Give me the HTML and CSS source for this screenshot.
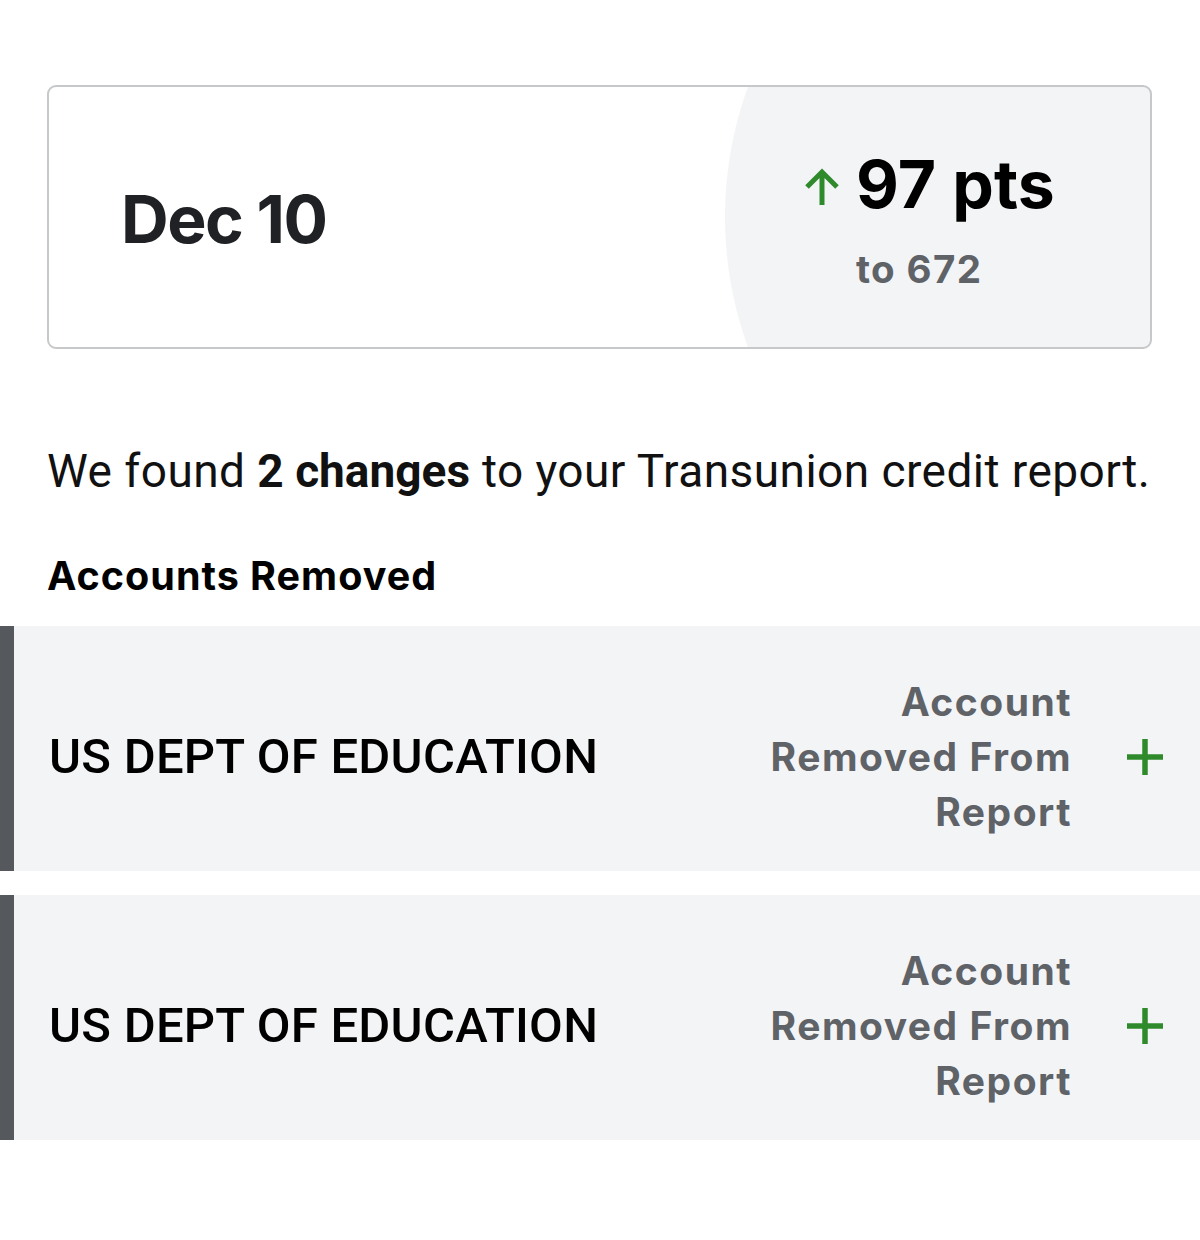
FILE: index.html
```html
<!DOCTYPE html>
<html lang="en">
<head>
<meta charset="utf-8">
<title>Credit report changes</title>
<link rel="stylesheet" href="styles.css">
</head>
<body>
<main class="page">
  <section class="summary">
    <div class="card">
      <div class="card-date">Dec 10</div>
      <div class="score">
        <svg class="score-arrow" viewBox="0 0 34 37" width="34" height="37" aria-hidden="true">
          <path d="M17 37 V4 M2 19 L17 4 L32 19" fill="none" stroke="#2f8a2c" stroke-width="5"/>
        </svg>
        <div class="score-pts">97 pts</div>
        <div class="score-to">to 672</div>
      </div>
    </div>
    <p class="intro">We found <strong>2 changes</strong> to your Transunion credit report.</p>
    <h2 class="section-title">Accounts Removed</h2>
  </section>
  <ul class="changes">
    <li class="change">
      <span class="change-name">US DEPT OF EDUCATION</span>
      <span class="change-status">Account Removed From Report</span>
      <svg class="change-plus" viewBox="0 0 36 36" width="36" height="36" aria-hidden="true">
        <path d="M18 0 V36 M0 18 H36" fill="none" stroke="#2f8a2c" stroke-width="5.5"/>
      </svg>
    </li>
    <li class="change">
      <span class="change-name">US DEPT OF EDUCATION</span>
      <span class="change-status">Account Removed From Report</span>
      <svg class="change-plus" viewBox="0 0 36 36" width="36" height="36" aria-hidden="true">
        <path d="M18 0 V36 M0 18 H36" fill="none" stroke="#2f8a2c" stroke-width="5.5"/>
      </svg>
    </li>
  </ul>
</main>
</body>
</html>
```
FILE: styles.css
```css
* { box-sizing: border-box; }

html, body {
  margin: 0;
  padding: 0;
  background: #ffffff;
}

body {
  font-family: Inter, "Liberation Sans", sans-serif;
  color: #000;
}

.page {
  padding-top: 85px;
}

.summary {
  padding: 0 48px 0 47px;
}

.card {
  height: 264px;
  border: 2px solid #c6c8ca;
  border-radius: 9px;
  display: flex;
  align-items: center;
  justify-content: space-between;
  padding: 0 95px 0 72px;
  background: radial-gradient(circle 380px at calc(100% - 45px) 50%, #f3f4f6 379.5px, #ffffff 380.5px);
}

.card-date {
  font-size: 66px;
  line-height: 66px;
  font-weight: 700;
  color: #202124;
  letter-spacing: -1.5px;
  margin-top: 4px;
}

.score {
  display: grid;
  grid-template-columns: auto auto;
  column-gap: 17px;
  align-items: center;
  margin-top: 4px;
}

.score-arrow {
  display: block;
  margin-top: 6px;
}

.score-pts {
  font-size: 66px;
  line-height: 66px;
  font-weight: 700;
  letter-spacing: 0.2px;
  color: #000;
}

.score-to {
  grid-column: 2;
  font-size: 38.5px;
  line-height: 38px;
  font-weight: 700;
  letter-spacing: 1.4px;
  color: #5f6368;
  margin-top: 33px;
}

.intro {
  margin: 94px 0 0;
  font-family: Roboto, sans-serif;
  font-size: 46px;
  line-height: 56px;
  font-weight: 400;
  letter-spacing: 0.45px;
  color: #111;
  white-space: nowrap;
}

.intro strong {
  font-weight: 700;
  letter-spacing: 0;
}

.section-title {
  margin: 54px 0 0;
  font-family: Inter, sans-serif;
  font-size: 39.5px;
  line-height: 46px;
  font-weight: 700;
  letter-spacing: 1px;
  color: #000;
  white-space: nowrap;
}

.changes {
  list-style: none;
  margin: 27px 0 0;
  padding: 0;
  display: flex;
  flex-direction: column;
  gap: 24px;
}

.change {
  display: flex;
  align-items: center;
  background: #f3f4f6;
  border-left: 14px solid #55595d;
  padding: 48px 37px 32px 35px;
}

.change-name {
  flex: 1;
  font-family: Roboto, sans-serif;
  font-size: 49px;
  font-weight: 500;
  letter-spacing: 0.25px;
  color: #000;
  white-space: nowrap;
}

.change-status {
  width: 312px;
  text-align: right;
  font-size: 39px;
  line-height: 55px;
  font-weight: 700;
  letter-spacing: 1.5px;
  color: #5f6368;
}

.change-plus {
  display: block;
  margin-left: 55px;
  flex-shrink: 0;
}
```
